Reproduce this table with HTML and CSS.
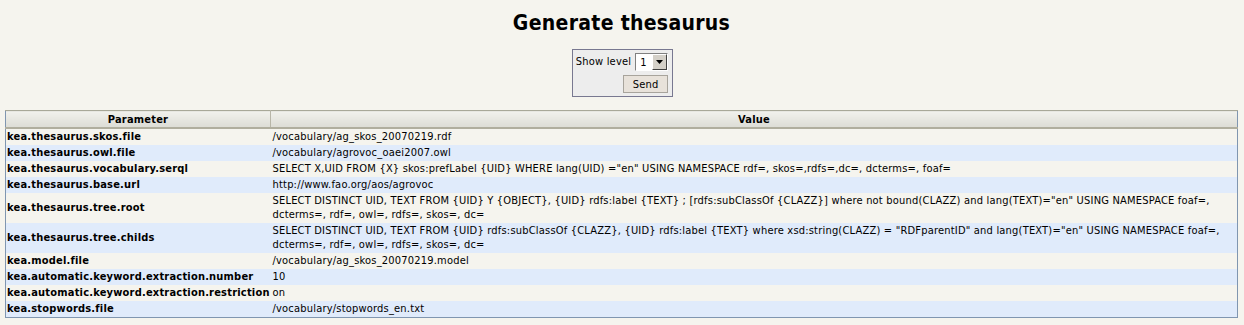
FILE: index.html
```html
<!DOCTYPE html>
<html>
<head>
<meta charset="utf-8">
<title>Generate thesaurus</title>
<link rel="stylesheet" href="styles.css">
</head>
<body>
<h1 class="title">Generate thesaurus</h1>
<form class="level-form">
  <div class="level-row">
    <label class="level-label" for="level">Show level</label>
    <span class="select-wrap">
      <select id="level" class="level-select"><option>1</option><option>2</option><option>3</option></select>
      <span class="select-btn"><svg width="7" height="4" viewBox="0 0 7 4"><path d="M0 0H7L3.5 4Z" fill="#000"/></svg></span>
    </span>
  </div>
  <div class="send-row"><button type="button" class="send-btn">Send</button></div>
</form>
<table class="params">
  <thead>
    <tr><th class="col-param">Parameter</th><th class="col-value">Value</th></tr>
  </thead>
  <tbody>
    <tr><td class="key">kea.thesaurus.skos.file</td><td>/vocabulary/ag_skos_20070219.rdf</td></tr>
    <tr class="alt"><td class="key">kea.thesaurus.owl.file</td><td>/vocabulary/agrovoc_oaei2007.owl</td></tr>
    <tr><td class="key">kea.thesaurus.vocabulary.serql</td><td>SELECT X,UID FROM {X} skos:prefLabel {UID} WHERE lang(UID) ="en" USING NAMESPACE rdf=, skos=,rdfs=,dc=, dcterms=, foaf=</td></tr>
    <tr class="alt"><td class="key">kea.thesaurus.base.url</td><td>http://www.fao.org/aos/agrovoc</td></tr>
    <tr><td class="key">kea.thesaurus.tree.root</td><td>SELECT DISTINCT UID, TEXT FROM {UID} Y {OBJECT}, {UID} rdfs:label {TEXT} ; [rdfs:subClassOf {CLAZZ}] where not bound(CLAZZ) and lang(TEXT)="en" USING NAMESPACE foaf=, dcterms=, rdf=, owl=, rdfs=, skos=, dc=</td></tr>
    <tr class="alt"><td class="key">kea.thesaurus.tree.childs</td><td>SELECT DISTINCT UID, TEXT FROM {UID} rdfs:subClassOf {CLAZZ}, {UID} rdfs:label {TEXT} where xsd:string(CLAZZ) = "RDFparentID" and lang(TEXT)="en" USING NAMESPACE foaf=, dcterms=, rdf=, owl=, rdfs=, skos=, dc=</td></tr>
    <tr><td class="key">kea.model.file</td><td>/vocabulary/ag_skos_20070219.model</td></tr>
    <tr class="alt"><td class="key">kea.automatic.keyword.extraction.number</td><td>10</td></tr>
    <tr><td class="key">kea.automatic.keyword.extraction.restriction</td><td>on</td></tr>
    <tr class="alt"><td class="key">kea.stopwords.file</td><td>/vocabulary/stopwords_en.txt</td></tr>
  </tbody>
</table>
</body>
</html>
```
FILE: styles.css
```css
html, body {
  margin: 0;
  padding: 0;
  background: #f5f4ee;
}
body {
  padding: 0 6px 0 5px;
  font-family: "DejaVu Sans Condensed", "DejaVu Sans", sans-serif;
  font-size: 11px;
  letter-spacing: 0.2px;
  color: #000;
}
.title {
  margin: 0;
  padding-top: 10px;
  height: 39px;
  text-align: center;
  font-size: 21px;
  line-height: 26px;
  font-weight: bold;
  letter-spacing: 0.3px;
}
.level-form {
  display: flex;
  flex-direction: column;
  gap: 4px;
  width: fit-content;
  margin: 0 auto;
  padding: 3px 4px 3px 3px;
  border: 1px solid #787890;
  background: #ededed;
  position: relative;
  left: 1px;
}
.level-row {
  display: flex;
  align-items: center;
  gap: 4px;
}
.level-label {
  line-height: 14px;
}
.select-wrap {
  position: relative;
  display: inline-block;
  width: 33px;
  height: 18px;
}
.level-select {
  appearance: none;
  -webkit-appearance: none;
  box-sizing: border-box;
  width: 33px;
  height: 18px;
  margin: 0;
  padding: 0 0 0 4px;
  font-family: "DejaVu Sans Condensed", "DejaVu Sans", sans-serif;
  font-size: 11px;
  background: #fff;
  border: 1px solid;
  border-color: #808080 #ffffff #ffffff #808080;
  border-radius: 0;
  color: #000;
}
.select-btn {
  position: absolute;
  right: 1px;
  top: 1px;
  width: 15px;
  height: 16px;
  box-sizing: border-box;
  display: flex;
  align-items: center;
  justify-content: center;
  background: #d4d0c8;
  border: 1px solid;
  border-color: #ffffff #404040 #404040 #ffffff;
  pointer-events: none;
}
.send-row {
  display: flex;
  justify-content: flex-end;
}
.send-btn {
  box-sizing: border-box;
  width: 45px;
  height: 18px;
  margin: 0;
  padding: 0;
  font-family: "DejaVu Sans Condensed", "DejaVu Sans", sans-serif;
  font-size: 11px;
  letter-spacing: 0.2px;
  color: #000;
  background: #e8e2da;
  border: 1px solid #a8a49c;
  border-radius: 0;
}
.params {
  margin-top: 13px;
  width: 100%;
  border-collapse: collapse;
  border: 1px solid #8096b0;
}
.params th {
  height: 15px;
  padding: 1px 0 0 0;
  line-height: 14px;
  font-weight: bold;
  text-align: center;
  background: linear-gradient(#f1f1ec, #dcdcd5);
  border-top: 1px solid #a8a898;
  border-bottom: 2px solid #b0ae9e;
}
.params th.col-param {
  width: 264px;
  border-right: 1px solid #b8b6a8;
}
.params td {
  padding: 1px 0 1px 0;
  line-height: 14px;
  vertical-align: middle;
  background: #f5f4ee;
}
.params tr.alt td {
  background: #e0ebfb;
}
.params td.key {
  font-weight: bold;
  white-space: nowrap;
  padding-left: 1px;
}
.params td + td {
  padding-left: 2px;
}
```
